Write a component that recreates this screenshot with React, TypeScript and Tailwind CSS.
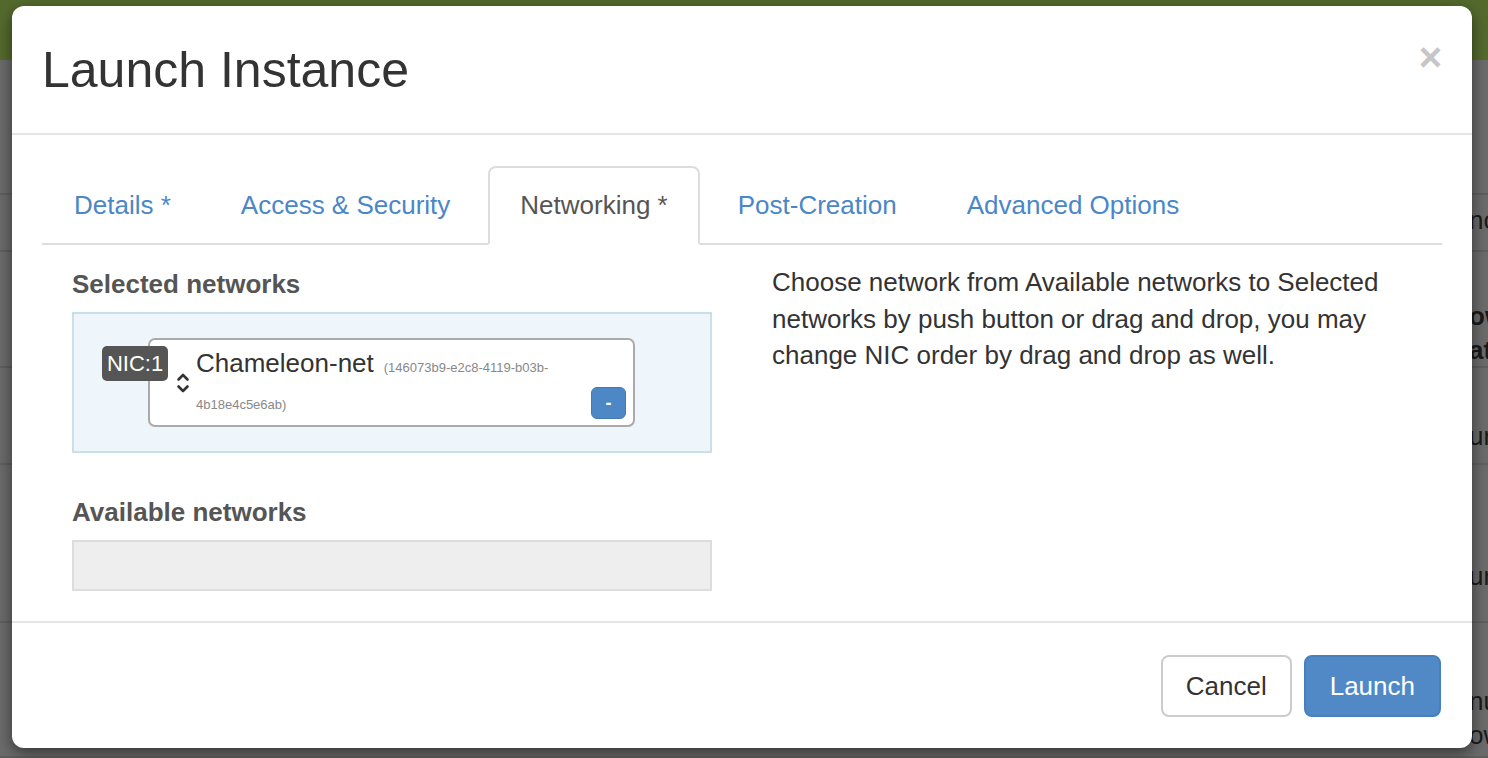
import React from "react";

const tabs = [
  { label: "Details *", active: false },
  { label: "Access & Security", active: false },
  { label: "Networking *", active: true },
  { label: "Post-Creation", active: false },
  { label: "Advanced Options", active: false },
];

// the page behind the backdrop, only a sliver shows on the right
const bgRows = [
  { h: "h-[135px]", pt: "pt-[8px]", lines: [] as string[], bold: false },
  { h: "h-[57px]", pt: "pt-[8px]", lines: ["nce"], bold: false },
  { h: "h-[116px]", pt: "pt-[47px]", lines: ["ow", "at"], bold: true },
  { h: "h-[97px]", pt: "pt-[51px]", lines: ["urs"], bold: false },
  { h: "h-[158px]", pt: "pt-[94px]", lines: ["urs"], bold: false },
  { h: "h-[135px]", pt: "pt-[61px]", lines: ["nu", "ow"], bold: false },
];

function SortArrows() {
  return (
    <svg width="14" height="20" viewBox="0 0 14 20" fill="none" stroke="#333" strokeWidth="2.6" strokeLinecap="round" strokeLinejoin="round">
      <path d="M2.5 6.5 L7 2 L11.5 6.5" />
      <path d="M2.5 13.5 L7 18 L11.5 13.5" />
    </svg>
  );
}

export default function App() {
  return (
    <div className="relative h-[758px] w-[1488px] overflow-hidden bg-[#6b6b6b] font-['Liberation_Sans',Arial,sans-serif]">
      {/* Page behind */}
      <div className="h-[60px] bg-[#546a2d]" />
      <div className="flex flex-col">
        {bgRows.map((r, i) => (
          <div key={i} className={`${r.h} ${r.pt} border-b-2 border-[#5f5f5f] whitespace-nowrap pl-[1469px]`}>
            {r.lines.map((l) => (
              <div key={l} className={`text-[26px] leading-[34px] text-[#1a1a1a] ${r.bold ? "font-bold" : ""}`}>
                {l}
              </div>
            ))}
          </div>
        ))}
      </div>

      {/* Modal */}
      <div className="absolute left-[12px] top-[6px] flex h-[742px] w-[1460px] flex-col rounded-[12px] bg-white shadow-[0_5px_15px_rgba(0,0,0,0.5)]">
        {/* Header */}
        <div className="flex h-[129px] items-center justify-between border-b-2 border-[#e5e5e5] px-[30px]">
          <h3 className="mt-[2px] text-[50px] leading-[55px] text-[#333]">Launch Instance</h3>
          <button type="button" className="mt-[-26px] text-[40px] font-bold leading-none text-[#c6c6c6]">
            ×
          </button>
        </div>

        {/* Body */}
        <div className="flex-1 px-[30px] pt-[31px]">
          <ul className="flex border-b-2 border-[#ddd]">
            {tabs.map((t) => (
              <li key={t.label} className="-mb-[2px] mr-[6px]">
                <a
                  className={
                    t.active
                      ? "block rounded-t-[8px] border-2 border-[#ddd] border-b-transparent bg-white px-[30px] pb-[19px] pt-[19px] text-[26px] leading-[37px] text-[#555]"
                      : "block border-2 border-transparent px-[30px] pb-[19px] pt-[19px] text-[26px] leading-[37px] text-[#4a87c7]"
                  }
                >
                  {t.label}
                </a>
              </li>
            ))}
          </ul>

          <div className="grid grid-cols-2 pt-[21px]">
            {/* Left column */}
            <div className="px-[30px]">
              <div className="mb-[9px] text-[26px] font-bold leading-[37px] text-[#555]">Selected networks</div>
              <div className="h-[141px] border-2 border-[#c9dfea] bg-[#eef6fc] pl-[74px] pt-[24px]">
                <div className="relative flex h-[89px] w-[487px] rounded-[7px] border-2 border-[#aaa] bg-white">
                  <span className="absolute left-[-48px] top-[6px] flex h-[35px] w-[66px] items-center justify-center rounded-[5px] bg-[#555] text-[22px] text-white">
                    NIC:1
                  </span>
                  <span className="absolute left-[26px] top-[33px]">
                    <SortArrows />
                  </span>
                  <div className="min-w-0 flex-1 pl-[46px] pt-[5px] leading-[36px]">
                    <span className="text-[26px] text-[#333]">Chameleon-net</span>
                    <span className="ml-[10px] text-[13px] text-[#888]">(146073b9-e2c8-4119-b03b-4b18e4c5e6ab)</span>
                  </div>
                  <button
                    type="button"
                    className="mb-[6px] ml-[10px] mr-[7px] flex h-[32px] w-[35px] items-center justify-center self-end rounded-[6px] border border-[#4479b3] bg-[#4d87c5] text-[18px] font-bold leading-none text-white"
                  >
                    -
                  </button>
                </div>
              </div>

              <div className="mb-[9px] mt-[41px] text-[26px] font-bold leading-[37px] text-[#555]">Available networks</div>
              <div className="h-[51px] border-2 border-[#ddd] bg-[#eee]" />
            </div>

            {/* Right column */}
            <div className="px-[30px]">
              <p className="-mt-[2px] text-[26px] leading-[36.5px] text-[#333]">
                Choose network from Available networks to Selected networks by push button or drag and drop, you may change NIC order by drag and drop as well.
              </p>
            </div>
          </div>
        </div>

        {/* Footer */}
        <div className="flex h-[127px] items-start justify-end gap-[12px] border-t-2 border-[#e5e5e5] pr-[31px] pt-[32px]">
          <button type="button" className="h-[62px] rounded-[8px] border-2 border-[#ccc] bg-white px-[23px] text-[26px] text-[#333]">
            Cancel
          </button>
          <button type="button" className="h-[62px] rounded-[8px] border-2 border-[#4680bd] bg-[#5089c6] px-[24px] text-[26px] text-white">
            Launch
          </button>
        </div>
      </div>
    </div>
  );
}
